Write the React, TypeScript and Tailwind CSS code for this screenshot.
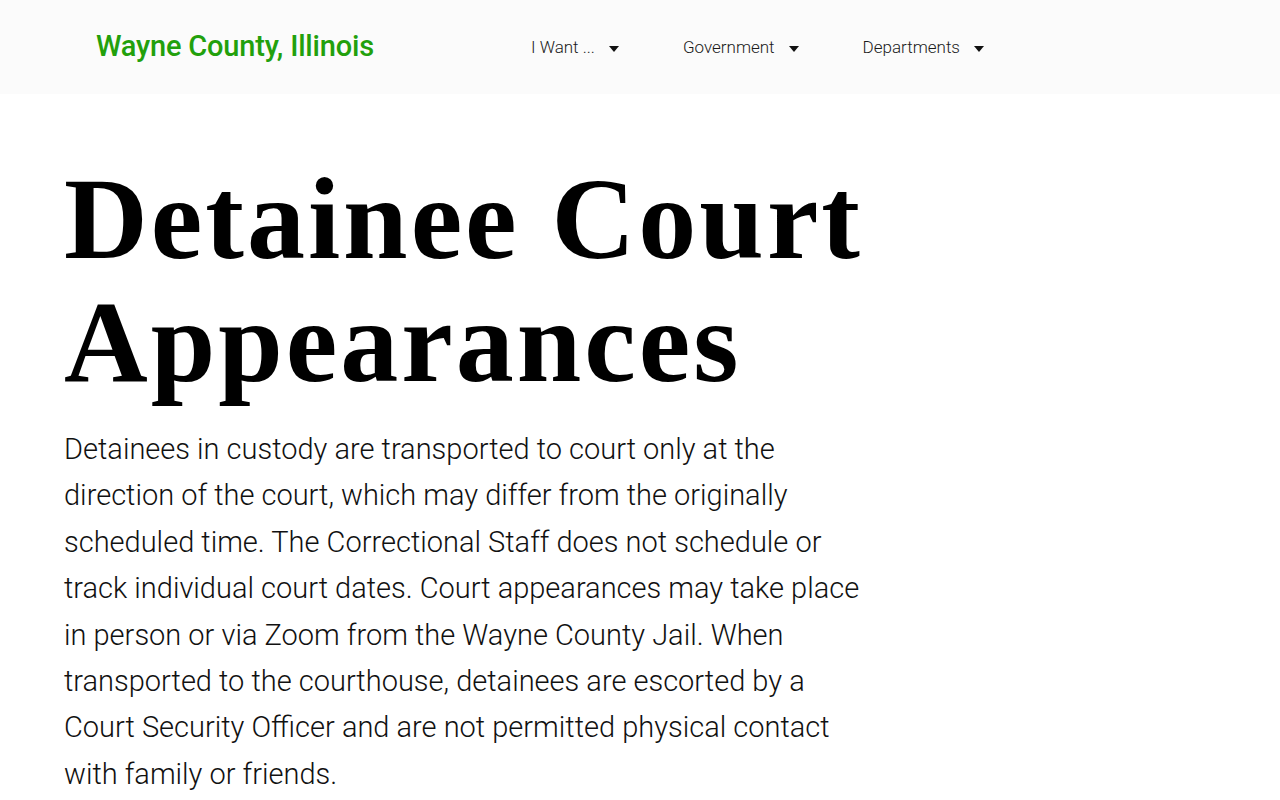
import React from "react";

const Caret = () => (
  <svg width="10" height="6" viewBox="0 0 10 6" className="ml-[14px] mt-[2px]">
    <path d="M0 0 L10 0 L5 6 Z" fill="#111" />
  </svg>
);

export default function App() {
  const items = ["I Want ...", "Government", "Departments"];
  return (
    <div className="min-h-screen bg-white" style={{ fontFamily: "Roboto, 'Liberation Sans', sans-serif" }}>
      <header className="h-[94px] bg-[#fbfbfb] flex items-center">
        <div className="w-[531px] pl-[96px]">
          <span className="text-[29px] font-medium text-[#22a00c] tracking-[-0.2px]">Wayne County, Illinois</span>
        </div>
        <nav className="flex items-center gap-[64px] pt-[2px]">
          {items.map((t) => (
            <div key={t} className="flex items-center text-[17px] font-light text-[#1a1a1a]">
              <span>{t}</span>
              <Caret />
            </div>
          ))}
        </nav>
      </header>
      <main className="pl-[64px] w-[880px]">
        <h1
          className="mt-[64px] text-[116px] font-bold leading-[123px] tracking-[3px] text-black"
          style={{ fontFamily: "'Liberation Serif', 'DejaVu Serif', serif" }}
        >
          Detainee Court Appearances
        </h1>
        <p className="mt-[22px] text-[29px] font-light leading-[46.4px] text-[#111]">
          Detainees in custody are transported to court only at the direction of the court, which may differ from the
          originally scheduled time. The Correctional Staff does not schedule or track individual court dates. Court
          appearances may take place in person or via Zoom from the Wayne County Jail. When transported to the
          courthouse, detainees are escorted by a Court Security Officer and are not permitted physical contact with
          family or friends.
        </p>
      </main>
    </div>
  );
}
